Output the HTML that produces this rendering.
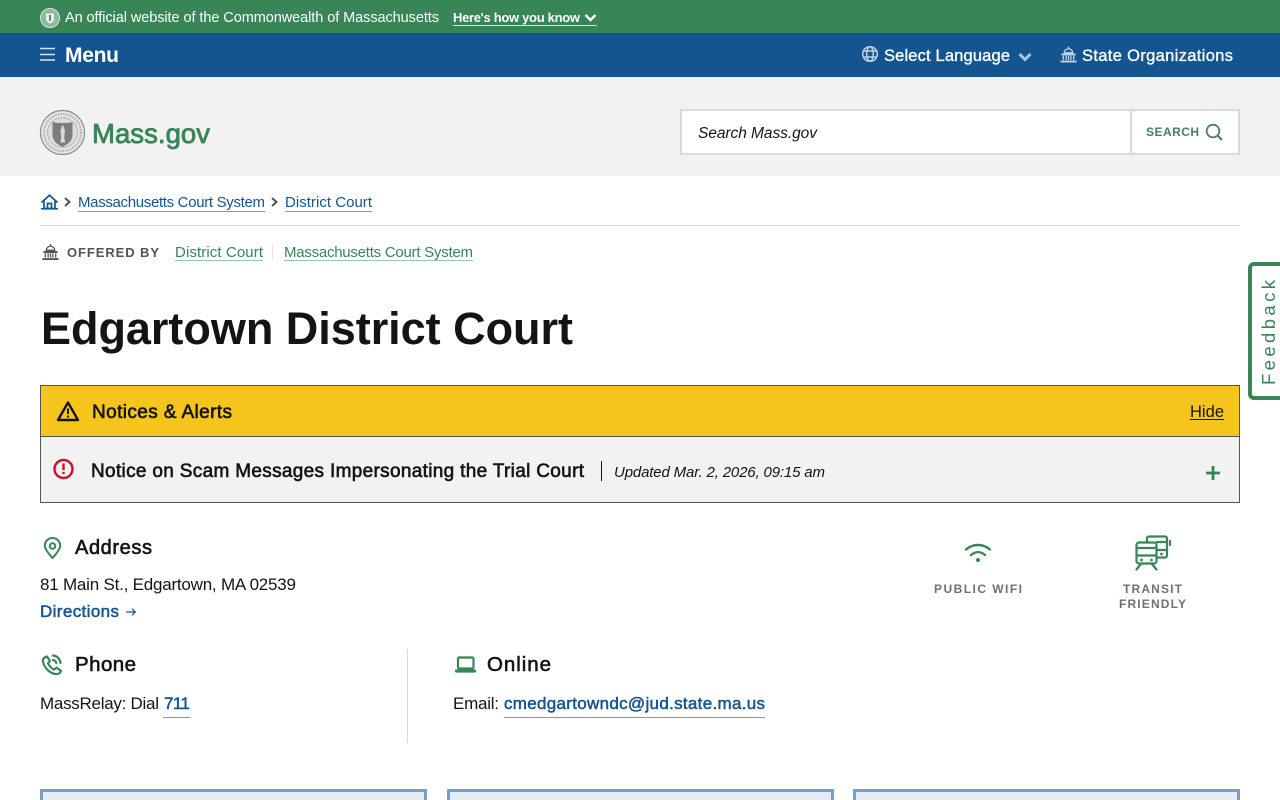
<!DOCTYPE html>
<html lang="en">
<head>
<meta charset="utf-8">
<title>Edgartown District Court | Mass.gov</title>
<style>
html,body{margin:0;padding:0;width:1280px;height:800px;overflow:hidden;background:#fff}
svg{display:block;position:absolute;left:0;top:0}
text{font-family:"Liberation Sans",sans-serif;fill:#141414}
.b{font-weight:700}
.i{font-style:italic}
.l{fill:#14558f}
.g{fill:#388557}
.w{fill:#fff}
.m{stroke:#141414;stroke-width:.6px}
.ml{stroke:#14558f;stroke-width:.5px}
.mw{stroke:#fff;stroke-width:.35px}
.ic{fill:none;stroke:#388557;stroke-width:2;stroke-linecap:round;stroke-linejoin:round}
</style>
</head>
<body>
<svg width="1280" height="800" viewBox="0 0 1280 800" xmlns="http://www.w3.org/2000/svg">
<defs>
<symbol id="bld" viewBox="0 0 18 18">
<path d="M9 .5V3M4.500 7.200A4.500 4.300 0 0 1 13.500 7.200Z" fill="none" stroke="currentColor" stroke-width="1.400"/>
<path d="M1.500 8h15v2h-15zM.5 15.500h17v2H.5z" fill="currentColor"/>
<path d="M3.500 10.500v4.500M6.500 10.500v4.500M9 10.500v4.500M11.500 10.500v4.500M14.500 10.500v4.500" stroke="currentColor" stroke-width="1.400"/>
</symbol>
</defs>

<!-- Bars -->
<rect x="0" y="0" width="1280" height="33" fill="#388557"/>
<rect x="0" y="33" width="1280" height="44" fill="#14558f"/>
<rect x="0" y="77" width="1280" height="99" fill="#f2f2f2"/>

<!-- Official banner -->
<circle cx="50" cy="18" r="9.500" fill="#8fb8a0" stroke="#d7e6dc" stroke-width="1"/>
<path d="M46 13.500h8v5c0 2.500-2 4-4 5-2-1-4-2.500-4-5z" fill="#f2f7f3"/>
<path d="M50 15v6" stroke="#388557" stroke-width="1.800"/>
<text x="65" y="22" font-size="14.500" class="w" textLength="374" lengthAdjust="spacing">An official website of the Commonwealth of Massachusetts</text>
<text x="453" y="22" font-size="13" class="w b" textLength="127" lengthAdjust="spacing">Here's how you know</text>
<path d="M585.500 15l5 5 5-5" fill="none" stroke="#fff" stroke-width="2.400"/>
<rect x="453" y="25" width="144" height="1" fill="#cfe2d6"/>

<!-- Nav -->
<path d="M40 48.500h15M40 54.500h15M40 60h15" stroke="#d5e3f0" stroke-width="1.600"/>
<text x="65" y="62" font-size="21" class="w b" textLength="54" lengthAdjust="spacing">Menu</text>
<g fill="none" stroke="#bcd2e8" stroke-width="1.500">
<circle cx="870" cy="54" r="7.300"/>
<ellipse cx="870" cy="54" rx="3.300" ry="7.300"/>
<path d="M863 51h14M863 57h14"/>
</g>
<text x="884" y="61" font-size="16.500" class="w mw" textLength="126" lengthAdjust="spacing">Select Language</text>
<path d="M1019.500 54l5.500 5.500 5.500-5.500" fill="none" stroke="#a9c6e3" stroke-width="3"/>
<use href="#bld" x="1060" y="46" width="17" height="17" color="#bcd2e8"/>
<text x="1082" y="61" font-size="16.500" class="w mw" textLength="151" lengthAdjust="spacing">State Organizations</text>

<!-- Logo -->
<circle cx="62.500" cy="132.500" r="22" fill="#e9e9e7" stroke="#8d8d8b" stroke-width="1.200"/>
<circle cx="62.500" cy="132.500" r="18.500" fill="none" stroke="#b5b5b3" stroke-width="2.500" stroke-dasharray="1.500 1"/>
<circle cx="62.500" cy="132.500" r="15" fill="#dcdcd9" stroke="#a5a5a5" stroke-width=".7"/>
<path d="M52.500 122c6 1.500 14 1.500 20 0v13c0 6-5 9.500-10 12-5-2.500-10-6-10-12z" fill="#7a7f7c"/>
<path d="M62.500 125.500c1.500 0 1.500 2 1.200 3l1.300 1-.8 8 1 5h-5l1-5-.8-8 1.300-1c-.3-1-.3-3 .8-3z" fill="#d8dad8"/>
<text x="92" y="143" font-size="27.500" class="g" style="stroke:#388557;stroke-width:.8px" textLength="118" lengthAdjust="spacing">Mass.gov</text>

<!-- Search -->
<rect x="681" y="110" width="558" height="44" fill="#fff" stroke="#d9d9d9" stroke-width="2"/>
<rect x="1130" y="110" width="2" height="44" fill="#d9d9d9"/>
<text x="698" y="138" font-size="15.500" class="i" textLength="119" lengthAdjust="spacing">Search Mass.gov</text>
<text x="1146" y="136" font-size="12" class="b" style="fill:#4a7f60" textLength="53" lengthAdjust="spacing">SEARCH</text>
<circle cx="1213" cy="131" r="6.300" fill="none" stroke="#4a7f60" stroke-width="1.800"/>
<path d="M1217.500 135.500l4.500 4.500" stroke="#4a7f60" stroke-width="2"/>

<!-- Breadcrumbs -->
<g fill="none" stroke="#14558f" stroke-width="1.700">
<path d="M41.500 202.500l8-7.300 8 7.300"/>
<path d="M44 201v7.500h11V201M47.500 208v-4.500h4V208"/>
</g>
<rect x="41" y="208" width="17" height="1.600" fill="#14558f"/>
<path d="M65 198l4.500 4-4.500 4" fill="none" stroke="#535353" stroke-width="2"/>
<text x="78" y="207" font-size="15" class="l" textLength="187" lengthAdjust="spacing">Massachusetts Court System</text>
<rect x="78" y="211" width="187" height="1" fill="#7d9cbc"/>
<path d="M272 198l4.500 4-4.500 4" fill="none" stroke="#535353" stroke-width="2"/>
<text x="285" y="207" font-size="15" class="l" textLength="87" lengthAdjust="spacing">District Court</text>
<rect x="285" y="211" width="87" height="1" fill="#7d9cbc"/>
<rect x="40" y="225" width="1200" height="1" fill="#d9d9d9"/>

<!-- Offered by -->
<use href="#bld" x="42" y="243" width="17" height="18" color="#535353"/>
<text x="67" y="257" font-size="13" class="b" style="fill:#535353" textLength="92" lengthAdjust="spacing">OFFERED BY</text>
<text x="175" y="257" font-size="15" class="g" textLength="88" lengthAdjust="spacing">District Court</text>
<rect x="175" y="260" width="88" height="1" fill="#9cc2aa"/>
<rect x="272" y="245" width="1" height="15" fill="#e2e2e2"/>
<text x="284" y="257" font-size="15" class="g" textLength="189" lengthAdjust="spacing">Massachusetts Court System</text>
<rect x="284" y="260" width="189" height="1" fill="#9cc2aa"/>

<!-- Feedback -->
<path d="M1280 264h-26a4 4 0 0 0-4 4v126a4 4 0 0 0 4 4h26" fill="#fff" stroke="#388557" stroke-width="4"/>
<text transform="translate(1275 385) rotate(-90)" font-size="18.500" class="g" textLength="105" lengthAdjust="spacing">Feedback</text>

<!-- Title -->
<text x="41" y="344" font-size="45" class="b" textLength="532" lengthAdjust="spacing">Edgartown District Court</text>

<!-- Alerts -->
<rect x="40.500" y="385.500" width="1199" height="117" fill="#f2f2f2" stroke="#535353"/>
<rect x="41" y="386" width="1198" height="50" fill="#f6c51b"/>
<rect x="41" y="436" width="1198" height="1" fill="#535353"/>
<path d="M68 402.500l10 17.500H58z" fill="none" stroke="#141414" stroke-width="2.400" stroke-linejoin="round"/>
<path d="M68 408.500v5.500M68 415.500v2" stroke="#141414" stroke-width="2"/>
<text x="92" y="418" font-size="19" class="m" textLength="140" lengthAdjust="spacing">Notices &amp; Alerts</text>
<text x="1190" y="417" font-size="16.500" textLength="34" lengthAdjust="spacing">Hide</text>
<rect x="1190" y="419" width="34" height="1" fill="#141414"/>
<circle cx="63.500" cy="469" r="9" fill="none" stroke="#c9132b" stroke-width="2.400"/>
<path d="M63.500 463.500v6.500M63.500 471.700v2.300" stroke="#c9132b" stroke-width="2.400"/>
<text x="91" y="477" font-size="19" class="m" textLength="493" lengthAdjust="spacing">Notice on Scam Messages Impersonating the Trial Court</text>
<rect x="601" y="461" width="1" height="20" fill="#141414"/>
<text x="614" y="477" font-size="15" class="i" textLength="211" lengthAdjust="spacing">Updated Mar. 2, 2026, 09:15 am</text>
<path d="M1206 473h14M1213 466v14" stroke="#388557" stroke-width="2.800"/>

<!-- Address -->
<path d="M52.500 558c-4-4.500-7.700-9-7.700-12.300a7.700 7.700 0 0 1 15.400 0c0 3.300-3.700 7.800-7.700 12.300z" class="ic" style="stroke-width:2"/>
<circle cx="52.500" cy="546" r="2.800" class="ic" style="stroke-width:2"/>
<text x="75" y="554" font-size="20" class="m" textLength="77" lengthAdjust="spacing">Address</text>
<text x="40" y="590" font-size="17" textLength="256" lengthAdjust="spacing">81 Main St., Edgartown, MA 02539</text>
<text x="40" y="617" font-size="17" class="l ml" textLength="79" lengthAdjust="spacing">Directions</text>
<path d="M126 612h9M132 608.700l3.300 3.300-3.300 3.300" fill="none" stroke="#14558f" stroke-width="1.200"/>

<!-- Features -->
<path d="M966 549.500c7-6 17-6 24 0M971 555c4.500-3.800 9.500-3.800 14 0" class="ic" style="stroke-width:2.400"/>
<circle cx="978" cy="560" r="2" fill="#388557"/>
<text x="934" y="593" font-size="12" class="b" style="fill:#707070" textLength="88" lengthAdjust="spacing">PUBLIC WIFI</text>
<g class="ic" style="stroke-width:2.200">
<path d="M1147 542v-3.500a2 2 0 0 1 2-2h16a2 2 0 0 1 2 2v17a2 2 0 0 1-2 2h-8M1157 542h10M1157 550h10"/>
<path d="M1170 541v4"/>
<rect x="1136.500" y="542.500" width="20" height="21" rx="2.500" style="fill:#fff"/>
<path d="M1136.500 548h20M1136.500 555.500h20M1141 564l-4.500 5.500M1152 564l4.500 5.500"/>
</g>
<circle cx="1141.500" cy="560" r="1.400" fill="#388557"/>
<circle cx="1151.500" cy="560" r="1.400" fill="#388557"/>
<circle cx="1161.500" cy="554" r="1.400" fill="#388557"/>
<text x="1123" y="593" font-size="12" class="b" style="fill:#707070" textLength="59" lengthAdjust="spacing">TRANSIT</text>
<text x="1119" y="608" font-size="12" class="b" style="fill:#707070" textLength="67" lengthAdjust="spacing">FRIENDLY</text>

<!-- Phone -->
<path d="M47 656.500c-2.500.5-4.500 2.500-4 5 1 6 6.500 12 13 12.500 2.500.3 4.500-1 5-3.200l-4.500-3.200-2.500 2c-2.500-1-5-4-6-6.300l2-2.300z" class="ic" style="stroke-width:2.200"/>
<path d="M53 655.500c4 .3 7 3.300 7.500 7.500M53 660c2 .3 3 1.500 3.300 3.200" class="ic" style="stroke-width:2.200"/>
<text x="75" y="671" font-size="20.500" class="m" textLength="61" lengthAdjust="spacing">Phone</text>
<text x="40" y="709" font-size="17" textLength="119" lengthAdjust="spacing">MassRelay: Dial</text>
<text x="164" y="709" font-size="17" class="l ml" textLength="26" lengthAdjust="spacing">711</text>
<rect x="163" y="717" width="27" height="1" fill="#7d9cbc"/>
<rect x="407" y="649" width="1" height="94" fill="#d9d9d9"/>

<!-- Online -->
<rect x="458" y="657.500" width="15.500" height="11" rx="1.200" class="ic" style="stroke-width:2.200"/>
<path d="M456.500 671h18" class="ic" style="stroke-width:3.200"/>
<text x="487" y="671" font-size="20.500" class="m" textLength="64" lengthAdjust="spacing">Online</text>
<text x="453" y="709" font-size="17" textLength="46" lengthAdjust="spacing">Email:</text>
<text x="504" y="709" font-size="17" class="l ml" textLength="261" lengthAdjust="spacing">cmedgartowndc@jud.state.ma.us</text>
<rect x="504" y="717" width="261" height="1" fill="#7d9cbc"/>

<!-- Cards -->
<rect x="41.500" y="790.500" width="384" height="20" fill="#e6ecf4" stroke="#7a9cc5" stroke-width="3"/>
<rect x="448.500" y="790.500" width="384" height="20" fill="#e6ecf4" stroke="#7a9cc5" stroke-width="3"/>
<rect x="854.500" y="790.500" width="384" height="20" fill="#e6ecf4" stroke="#7a9cc5" stroke-width="3"/>
</svg>
</body>
</html>
